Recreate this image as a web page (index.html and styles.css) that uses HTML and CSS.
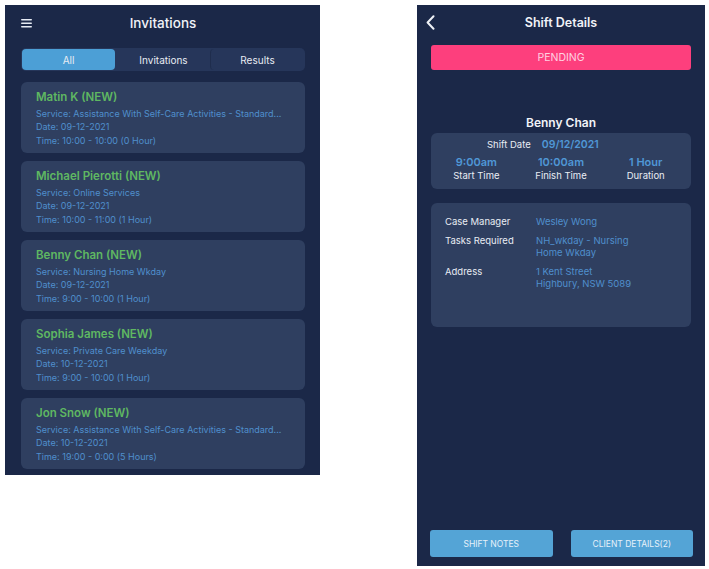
FILE: index.html
```html
<!DOCTYPE html>
<html lang="en">
<head>
    <meta charset="UTF-8">
    <meta name="viewport" content="width=device-width, initial-scale=1.0">
    <title>Invitations &amp; Shift Details</title>
    <link rel="stylesheet" href="styles.css">
</head>
<body>
    <div class="board">
        <!-- Invitations list -->
        <section class="phone phone-list">
            <header class="topbar">
                <svg class="menu-icon" width="11" height="9" viewBox="0 0 11 9">
                    <rect x="0" y="0" width="11" height="1.6" rx="0.8" fill="#e6ebf3"/>
                    <rect x="0" y="3.5" width="11" height="1.6" rx="0.8" fill="#e6ebf3"/>
                    <rect x="0" y="7" width="11" height="1.6" rx="0.8" fill="#e6ebf3"/>
                </svg>
                <h1>Invitations</h1>
            </header>

            <nav class="tabs">
                <span class="tab active">All</span>
                <span class="tab">Invitations</span>
                <span class="tab">Results</span>
            </nav>

            <div class="invite-list">
                <div class="invite">
                    <div class="invite-name">Matin K (NEW)</div>
                    <div class="invite-line">Service: Assistance With Self-Care Activities - Standard...</div>
                    <div class="invite-line">Date: 09-12-2021</div>
                    <div class="invite-line">Time: 10:00 - 10:00 (0 Hour)</div>
                </div>
                <div class="invite">
                    <div class="invite-name">Michael Pierotti (NEW)</div>
                    <div class="invite-line">Service: Online Services</div>
                    <div class="invite-line">Date: 09-12-2021</div>
                    <div class="invite-line">Time: 10:00 - 11:00 (1 Hour)</div>
                </div>
                <div class="invite">
                    <div class="invite-name">Benny Chan (NEW)</div>
                    <div class="invite-line">Service: Nursing Home Wkday</div>
                    <div class="invite-line">Date: 09-12-2021</div>
                    <div class="invite-line">Time: 9:00 - 10:00 (1 Hour)</div>
                </div>
                <div class="invite">
                    <div class="invite-name">Sophia James (NEW)</div>
                    <div class="invite-line">Service: Private Care Weekday</div>
                    <div class="invite-line">Date: 10-12-2021</div>
                    <div class="invite-line">Time: 9:00 - 10:00 (1 Hour)</div>
                </div>
                <div class="invite">
                    <div class="invite-name">Jon Snow (NEW)</div>
                    <div class="invite-line">Service: Assistance With Self-Care Activities - Standard...</div>
                    <div class="invite-line">Date: 10-12-2021</div>
                    <div class="invite-line">Time: 19:00 - 0:00 (5 Hours)</div>
                </div>
            </div>
        </section>

        <!-- Shift details -->
        <section class="phone phone-detail">
            <header class="topbar">
                <svg class="back-icon" width="9" height="15" viewBox="0 0 9 15">
                    <path d="M7.5 1.2 L1.6 7.5 L7.5 13.8" fill="none" stroke="#eef1f6" stroke-width="2" stroke-linecap="round" stroke-linejoin="round"/>
                </svg>
                <h1>Shift Details</h1>
            </header>

            <div class="status-bar">PENDING</div>

            <div class="client-name">Benny Chan</div>

            <div class="panel shift-panel">
                <div class="shift-date">
                    <span class="shift-date-label">Shift Date</span>
                    <span class="shift-date-value">09/12/2021</span>
                </div>
                <div class="shift-times">
                    <div class="shift-time">
                        <span class="time-value">9:00am</span>
                        <span class="time-label">Start Time</span>
                    </div>
                    <div class="shift-time">
                        <span class="time-value">10:00am</span>
                        <span class="time-label">Finish Time</span>
                    </div>
                    <div class="shift-time">
                        <span class="time-value">1 Hour</span>
                        <span class="time-label">Duration</span>
                    </div>
                </div>
            </div>

            <div class="panel info-panel">
                <div class="info-row">
                    <span class="info-label">Case Manager</span>
                    <span class="info-value">Wesley Wong</span>
                </div>
                <div class="info-row">
                    <span class="info-label">Tasks Required</span>
                    <span class="info-value">NH_wkday - Nursing<br>Home Wkday</span>
                </div>
                <div class="info-row">
                    <span class="info-label">Address</span>
                    <span class="info-value">1 Kent Street<br>Highbury, NSW 5089</span>
                </div>
            </div>

            <div class="actions">
                <button class="action-btn">SHIFT NOTES</button>
                <button class="action-btn">CLIENT DETAILS(2)</button>
            </div>
        </section>
    </div>
</body>
</html>
```

FILE: styles.css
```css
body {
    margin: 0;
    background: #fff;
    font-family: Inter, "Noto Sans", sans-serif;
    color: #e9edf4;
}
.board {
    display: flex;
    align-items: flex-start;
    gap: 97px;
    padding: 5px;
}
.phone {
    flex-shrink: 0;
    background-color: #1b2848;
    overflow: hidden;
    box-sizing: border-box;
}
.phone-list {
    width: 315px;
    height: 470px;
    padding: 0 15px 0 16px;
}
.phone-detail {
    width: 288px;
    height: 561px;
    padding: 0 14px 9px;
    display: flex;
    flex-direction: column;
}

/* top bars */
.topbar {
    position: relative;
    height: 36px;
    display: flex;
    align-items: center;
    justify-content: center;
}
.topbar h1 {
    margin: 0;
    font-size: 13.5px;
    font-weight: 500;
    color: #f1f3f8;
}
.menu-icon {
    position: absolute;
    left: 0;
    top: 14px;
}
.phone-detail .topbar {
    height: 34px;
}
.phone-detail .topbar h1 {
    font-size: 12.5px;
    font-weight: 600;
}
.back-icon {
    position: absolute;
    left: -5px;
    top: 10px;
}

/* segmented tabs */
.tabs {
    margin-top: 7px;
    display: flex;
    height: 23px;
    padding: 1px;
    box-sizing: border-box;
    background-color: #26365a;
    border-radius: 5px;
}
.tab {
    flex: 1;
    display: flex;
    align-items: center;
    justify-content: center;
    font-size: 10px;
    color: #e8ecf3;
    border-radius: 4px;
}
.tab + .tab {
    border-left: 1px solid #1f2d4d;
}
.tab.active {
    background-color: #4c9fd6;
    margin-right: 2px;
}
.tab.active + .tab {
    border-left: none;
}

/* invitation cards */
.invite-list {
    margin-top: 11px;
    display: flex;
    flex-direction: column;
    gap: 8px;
}
.invite {
    height: 71px;
    box-sizing: border-box;
    padding: 8px 15px 0;
    background-color: #2f3f60;
    border-radius: 6px;
}
.invite-name {
    font-size: 11.5px;
    font-weight: 600;
    color: #5fb862;
    line-height: 15px;
    margin-bottom: 1.5px;
}
.invite-line {
    font-size: 9px;
    line-height: 13.5px;
    color: #4f8fcd;
    white-space: nowrap;
}

/* shift details */
.status-bar {
    margin-top: 6px;
    height: 25px;
    display: flex;
    align-items: center;
    justify-content: center;
    background-color: #fd3f7d;
    border-radius: 3px;
    font-size: 10.5px;
    color: #ffd3e2;
}
.client-name {
    margin-top: 45px;
    line-height: 16px;
    text-align: center;
    font-size: 12px;
    font-weight: 600;
    color: #f1f3f8;
}
.panel {
    background-color: #2f3f60;
    border-radius: 6px;
}
.shift-panel {
    margin-top: 2px;
    height: 56px;
    box-sizing: border-box;
    padding: 5px 3px 0;
}
.shift-date {
    display: flex;
    align-items: center;
    gap: 11px;
    padding-left: 53px;
    line-height: 13px;
}
.shift-date-label {
    font-size: 9.5px;
}
.shift-date-value {
    font-size: 10.5px;
    font-weight: 600;
    color: #4f97d6;
}
.shift-times {
    margin-top: 4px;
    display: flex;
}
.shift-time {
    flex: 1;
    display: flex;
    flex-direction: column;
    align-items: center;
}
.time-value {
    font-size: 11px;
    font-weight: 600;
    color: #4f97d6;
    line-height: 14px;
}
.time-label {
    font-size: 9.5px;
    line-height: 14px;
}
.info-panel {
    margin-top: 14px;
    height: 124px;
    box-sizing: border-box;
    padding: 13px 14px 0;
    display: flex;
    flex-direction: column;
    gap: 7px;
}
.info-row {
    display: flex;
    font-size: 9.5px;
    line-height: 12px;
}
.info-label {
    width: 91px;
    flex-shrink: 0;
}
.info-value {
    color: #4f8fcd;
}

/* bottom buttons */
.actions {
    margin: auto -2px 0 -1px;
    display: flex;
    gap: 18px;
}
.action-btn {
    flex: 1;
    height: 27px;
    border: none;
    border-radius: 3px;
    background-color: #54a4d6;
    color: #e6f1fa;
    font-family: inherit;
    font-size: 8.5px;
    cursor: pointer;
}
```
